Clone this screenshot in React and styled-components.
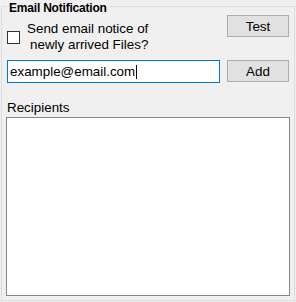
import styled, { createGlobalStyle } from 'styled-components';

const Global = createGlobalStyle`
    body {
        margin: 0;
        background: #f0f0f0;
        font-family: "Liberation Sans", Arial, sans-serif;
        font-size: 13.4px;
        color: #000;
    }
`;

const Group = styled.section`
    position: relative;
    box-sizing: border-box;
    width: 294px;
    height: 295px;
    margin: 6px 1px 0 1px;
    border: 1px solid #dcdcdc;
    padding: 8px 4px 4px 4px;
    display: flex;
    flex-direction: column;
`;

const Legend = styled.h2`
    position: absolute;
    top: -6px;
    left: 5px;
    margin: 0;
    padding: 0 2px;
    background: #f0f0f0;
    font-size: 12px;
    line-height: 14px;
    font-weight: bold;
    letter-spacing: -0.2px;
`;

const Row = styled.div`
    display: flex;
    justify-content: space-between;
    align-items: flex-start;
    margin-bottom: ${p => p.$gap || 0}px;
`;

const CheckGroup = styled.label`
    display: flex;
    align-items: center;
    margin-top: 6px;
`;

const Box = styled.span`
    box-sizing: border-box;
    width: 13px;
    height: 13px;
    margin-left: 1px;
    margin-right: 7px;
    border: 1px solid #333;
    background: #fff;
`;

const CheckText = styled.span`
    display: flex;
    flex-direction: column;
    align-items: flex-end;
    line-height: 16px;
`;

const Button = styled.button`
    box-sizing: border-box;
    width: 62px;
    height: 22px;
    margin-right: 1px;
    padding: 0;
    border: 1px solid #adadad;
    background: #e1e1e1;
    font-family: inherit;
    font-size: inherit;
    color: #000;
`;

const Field = styled.div`
    box-sizing: border-box;
    width: 213px;
    height: 23px;
    margin-left: 1px;
    border: 1px solid #0078d7;
    background: #fff;
    padding: 0 2px;
    display: flex;
    align-items: center;
    line-height: 16px;
`;

const Caret = styled.span`
    display: inline-block;
    width: 1px;
    height: 14px;
    background: #000;
    margin-left: 1px;
`;

const Label = styled.div`
    line-height: 16px;
    margin: 17px 0 1px 1px;
`;

const List = styled.div`
    flex: 1;
    border: 1px solid #828790;
    background: #fff;
`;

export default function App() {
    return (
        <>
            <Global />
            <Group>
                <Legend>Email Notification</Legend>
                <Row $gap={7}>
                    <CheckGroup>
                        <Box />
                        <CheckText>
                            <span>Send email notice of</span>
                            <span>newly arrived Files?</span>
                        </CheckText>
                    </CheckGroup>
                    <Button>Test</Button>
                </Row>
                <Row>
                    <Field>example@email.com<Caret /></Field>
                    <Button>Add</Button>
                </Row>
                <Label>Recipients</Label>
                <List />
            </Group>
        </>
    );
}
